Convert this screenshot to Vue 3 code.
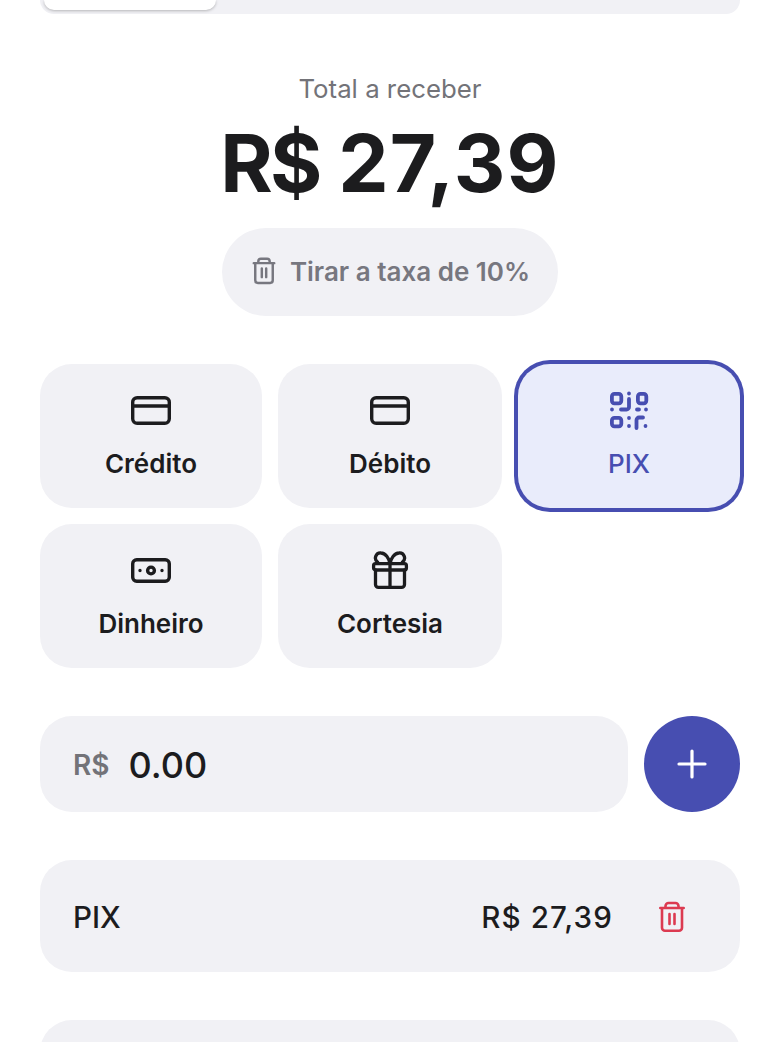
<script setup>
const methods = [
  { id: 'credito', label: 'Crédito', icon: 'card' },
  { id: 'debito', label: 'Débito', icon: 'card' },
  { id: 'pix', label: 'PIX', icon: 'qr', active: true },
  { id: 'dinheiro', label: 'Dinheiro', icon: 'cash' },
  { id: 'cortesia', label: 'Cortesia', icon: 'gift' },
];

const trashPath = 'M4.300 7h23.400M9.500 7V5a3 3 0 0 1 3-3h7a3 3 0 0 1 3 3v2M6 7v19.700a3 3 0 0 0 3 3h14a3 3 0 0 0 3-3V7M13.500 13v10M18.500 13v10';
</script>

<template>
  <main class="page">
    <div class="tabs"><div class="tab"></div></div>

    <section class="total">
      <p class="total-label">Total a receber</p>
      <h1 class="total-value"><span class="currency">R$</span> <span class="digits">27,39</span></h1>
      <button class="fee-btn">
        <svg class="fee-icon" viewBox="0 0 32 32" fill="none" stroke="currentColor" stroke-width="2.800" stroke-linecap="round" stroke-linejoin="round">
          <path :d="trashPath" />
        </svg>
        Tirar a taxa de 10%
      </button>
    </section>

    <section class="methods">
      <button v-for="m in methods" :key="m.id" class="method" :class="{ active: m.active }">
        <svg v-if="m.icon === 'card'" class="method-icon" viewBox="0 0 40 40" fill="none" stroke="currentColor" stroke-width="3.400" stroke-linecap="round" stroke-linejoin="round">
          <rect x="1.700" y="6.700" width="36.600" height="25.600" rx="4.500" />
          <path d="M1.700 15h36.600" />
        </svg>
        <svg v-else-if="m.icon === 'qr'" class="method-icon" viewBox="0 0 40 40" fill="none" stroke="currentColor" stroke-width="3.800" stroke-linecap="round" stroke-linejoin="round">
          <rect x="2.900" y="2.900" width="9.400" height="9.400" rx="2.500" />
          <rect x="28.900" y="2.900" width="8.400" height="9.400" rx="2.500" />
          <rect x="2.900" y="26.900" width="9.400" height="8.400" rx="2.500" />
          <path d="M20 2.500v.1M20 8v8a2.500 2.500 0 0 1-2.500 2.500H12M3 18.500v.1M28 18.500h2M37 18.500v.1M20 27v.1M20 35v.1M27.500 37v-8a2.500 2.500 0 0 1 2.500-2.500h4M36.500 35v.1" />
        </svg>
        <svg v-else-if="m.icon === 'cash'" class="method-icon" viewBox="0 0 40 40" fill="none" stroke="currentColor" stroke-width="3.400" stroke-linecap="round" stroke-linejoin="round">
          <rect x="1.700" y="8.700" width="36.600" height="21.600" rx="4" />
          <circle cx="20" cy="19.500" r="3.400" />
          <path d="M9 19.500v.1M31 19.500v.1" />
        </svg>
        <svg v-else class="method-icon" viewBox="0 0 40 40" fill="none" stroke="currentColor" stroke-width="3.300" stroke-linecap="round" stroke-linejoin="round">
          <rect x="3.600" y="12.600" width="32.800" height="6.400" rx="2" />
          <path d="M5.500 19v14.400a3 3 0 0 0 3 3h23a3 3 0 0 0 3-3V19M20 12.600v23.800M20 12.500C19 7 15.500 2 11 2A5 5 0 0 0 7.500 11M20 12.500C21 7 24.500 2 29 2A5 5 0 0 1 32.500 11" />
        </svg>
        <span>{{ m.label }}</span>
      </button>
    </section>

    <section class="amount-row">
      <div class="amount">
        <span class="amount-prefix">R$</span>
        <span class="amount-value">0.00</span>
      </div>
      <button class="add-btn">
        <svg viewBox="0 0 32 32" fill="none" stroke="#fff" stroke-width="3.200" stroke-linecap="round">
          <path d="M16 3v26M3 16h26" />
        </svg>
      </button>
    </section>

    <section class="payment">
      <span class="payment-name">PIX</span>
      <span class="payment-value">R$ 27,39</span>
      <svg class="payment-trash" viewBox="0 0 32 32" fill="none" stroke="currentColor" stroke-width="2.600" stroke-linecap="round" stroke-linejoin="round">
        <path :d="trashPath" />
      </svg>
    </section>

    <section class="payment"></section>
  </main>
</template>

<style>
html, body {
  margin: 0;
  background: #fff;
}
</style>

<style scoped>
.page {
  height: 1042px;
  overflow: hidden;
  padding: 0 40px;
  box-sizing: border-box;
  font-family: Inter, "Liberation Sans", sans-serif;
  color: #1c1c1e;
}
button {
  font-family: inherit;
  border: none;
  padding: 0;
}
.tabs {
  height: 14px;
  background: #f1f1f5;
  border-radius: 0 0 24px 24px;
  padding: 0 4px;
  overflow: hidden;
}
.tab {
  width: 172px;
  height: 10px;
  background: #fff;
  border-radius: 0 0 20px 20px;
  box-shadow: 0 1px 3px rgba(0, 0, 0, 0.25);
}
.total {
  display: flex;
  flex-direction: column;
  align-items: center;
  padding-top: 58px;
}
.total-label {
  margin: 0;
  font-size: 25.800px;
  line-height: 34px;
  color: #737378;
}
.total-value {
  margin: 13px 0 0;
  font-size: 80px;
  line-height: 88px;
  font-weight: 700;
  color: #1c1c1e;
}
.currency {
  letter-spacing: -3px;
}
.digits {
  letter-spacing: 1.200px;
}
.fee-btn {
  margin-top: 21px;
  height: 88px;
  width: 336px;
  border-radius: 44px;
  background: #f1f1f5;
  color: #77777f;
  font-size: 26px;
  font-weight: 600;
  display: flex;
  align-items: center;
  justify-content: center;
  gap: 12px;
  padding-bottom: 2px;
  box-sizing: border-box;
}
.fee-icon {
  width: 28px;
  height: 28px;
}
.methods {
  margin-top: 48px;
  display: grid;
  grid-template-columns: 222px 224px 222px;
  gap: 16px;
}
.method {
  height: 144px;
  border-radius: 32px;
  background: #f1f1f5;
  color: #1c1c1e;
  font-size: 26px;
  font-weight: 600;
  display: flex;
  flex-direction: column;
  align-items: center;
  justify-content: center;
  gap: 17px;
  padding-bottom: 3px;
  box-sizing: border-box;
}
.method.active {
  background: #e9ecfb;
  color: #474eb1;
  font-weight: 500;
  box-shadow: 0 0 0 4px #474eb1;
}
.method-icon {
  width: 40px;
  height: 40px;
}
.amount-row {
  margin-top: 48px;
  display: flex;
  gap: 16px;
}
.amount {
  flex: 1;
  height: 96px;
  border-radius: 32px;
  background: #f1f1f5;
  display: flex;
  align-items: center;
  padding: 2px 0 0 33px;
  box-sizing: border-box;
  gap: 19px;
}
.amount-prefix {
  font-size: 28px;
  font-weight: 600;
  color: #737378;
}
.amount-value {
  font-size: 36px;
  font-weight: 500;
}
.add-btn {
  width: 96px;
  height: 96px;
  border-radius: 50%;
  background: #474eb1;
  display: flex;
  align-items: center;
  justify-content: center;
}
.add-btn svg {
  width: 32px;
  height: 32px;
}
.payment {
  margin-top: 48px;
  height: 112px;
  border-radius: 32px;
  background: #f1f1f5;
  display: flex;
  align-items: center;
  padding: 1px 52px 0 33px;
  box-sizing: border-box;
  font-size: 29.600px;
  font-weight: 500;
}
.payment-name {
  flex: 1;
}
.payment-value {
  letter-spacing: 1.100px;
}
.payment-trash {
  width: 32px;
  height: 32px;
  margin-left: 43px;
  color: #dc3a50;
}
</style>
